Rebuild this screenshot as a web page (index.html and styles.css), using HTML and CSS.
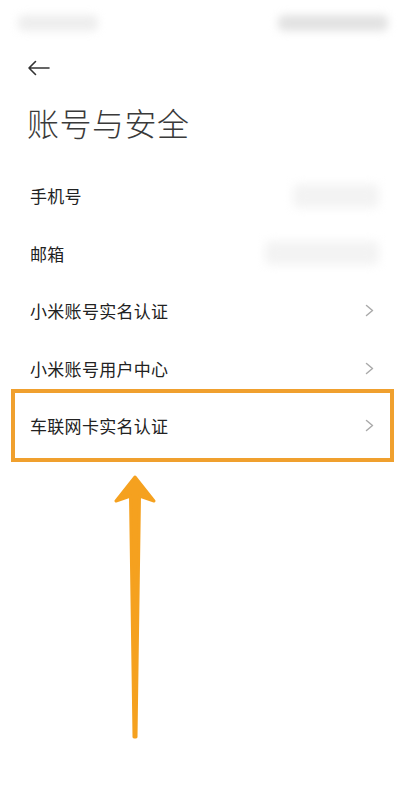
FILE: index.html
```html
<html>
	<head>
		<meta charset="utf-8">
		<title>账号与安全</title>
		<link rel="stylesheet" href="styles.css">
	</head>
	<body>
		<div class="status">
			<div class="blob blob-left"></div>
			<div class="blob blob-right"></div>
		</div>
		<div class="back">
			<svg width="24" height="16" viewBox="0 0 24 16">
				<path d="M22 8H2M8.5 1.5L2 8l6.5 6.5" fill="none" stroke="#333" stroke-width="1.6" stroke-linecap="round" stroke-linejoin="round"/>
			</svg>
		</div>
		<h1 class="title">账号与安全</h1>
		<div class="list">
			<div class="row">
				<span class="label">手机号</span>
				<span class="value value-phone"></span>
			</div>
			<div class="row">
				<span class="label">邮箱</span>
				<span class="value value-mail"></span>
			</div>
			<div class="row">
				<span class="label">小米账号实名认证</span>
				<svg class="chevron" width="9" height="13" viewBox="0 0 9 13"><path d="M1.5 1.5l6 5-6 5" fill="none" stroke="#aaa" stroke-width="1.5" stroke-linecap="round" stroke-linejoin="round"/></svg>
			</div>
			<div class="row">
				<span class="label">小米账号用户中心</span>
				<svg class="chevron" width="9" height="13" viewBox="0 0 9 13"><path d="M1.5 1.5l6 5-6 5" fill="none" stroke="#aaa" stroke-width="1.5" stroke-linecap="round" stroke-linejoin="round"/></svg>
			</div>
			<div class="row marked">
				<span class="label">车联网卡实名认证</span>
				<svg class="chevron" width="9" height="13" viewBox="0 0 9 13"><path d="M1.5 1.5l6 5-6 5" fill="none" stroke="#aaa" stroke-width="1.5" stroke-linecap="round" stroke-linejoin="round"/></svg>
			</div>
		</div>
		<!-- annotation arrow -->
		<svg class="pointer" width="405" height="800" viewBox="0 0 405 800">
			<path d="M135 477L116 501L130.5 496L134 737L136 737L139.5 496L154 501Z" fill="#f5a11f" stroke="#f5a11f" stroke-width="3" stroke-linejoin="round"/>
		</svg>
	</body>
</html>
```
FILE: styles.css
```css
body
{
	margin: 0;
	background: #ffffff;
	font-family: "Noto Sans CJK SC", "Noto Sans", sans-serif;
	color: #222222;
	position: relative;
	width: 405px;
	height: 800px;
	overflow: hidden;
}

.status
{
	height: 45px;
	display: flex;
	justify-content: space-between;
	align-items: flex-start;
	padding: 15px 17px 0 18px;
	box-sizing: border-box;
}
.blob
{
	height: 16px;
	background: #e2e2e2;
	filter: blur(4px);
	border-radius: 6px;
}
.blob-left
{
	width: 80px;
	opacity: 0.6;
}
.blob-right
{
	width: 110px;
}

.back
{
	height: 45px;
	padding-left: 27px;
	display: flex;
	align-items: center;
}

.title
{
	margin: 10px 0 23px 27px;
	font-size: 32px;
	line-height: 44px;
	font-weight: 300;
	color: #3a3a3a;
	letter-spacing: 0.5px;
}

.list
{
	display: flex;
	flex-direction: column;
}
.row
{
	height: 57.5px;
	display: flex;
	align-items: center;
	justify-content: space-between;
	padding: 0 30px 0 30px;
	position: relative;
}
.label
{
	font-size: 17px;
	letter-spacing: 0.3px;
}
.value
{
	height: 24px;
	background: #f3f3f3;
	filter: blur(5px);
	border-radius: 6px;
}
.value-phone
{
	width: 86px;
	margin-right: -4px;
}
.value-mail
{
	width: 114px;
	margin-right: -4px;
}
.chevron
{
	margin-right: 1px;
}

.marked::after
{
	content: "";
	position: absolute;
	left: 11px;
	right: 11px;
	top: -8px;
	bottom: -7px;
	border: 4px solid #f0a02e;
}

.pointer
{
	position: absolute;
	left: 0;
	top: 0;
}
```
